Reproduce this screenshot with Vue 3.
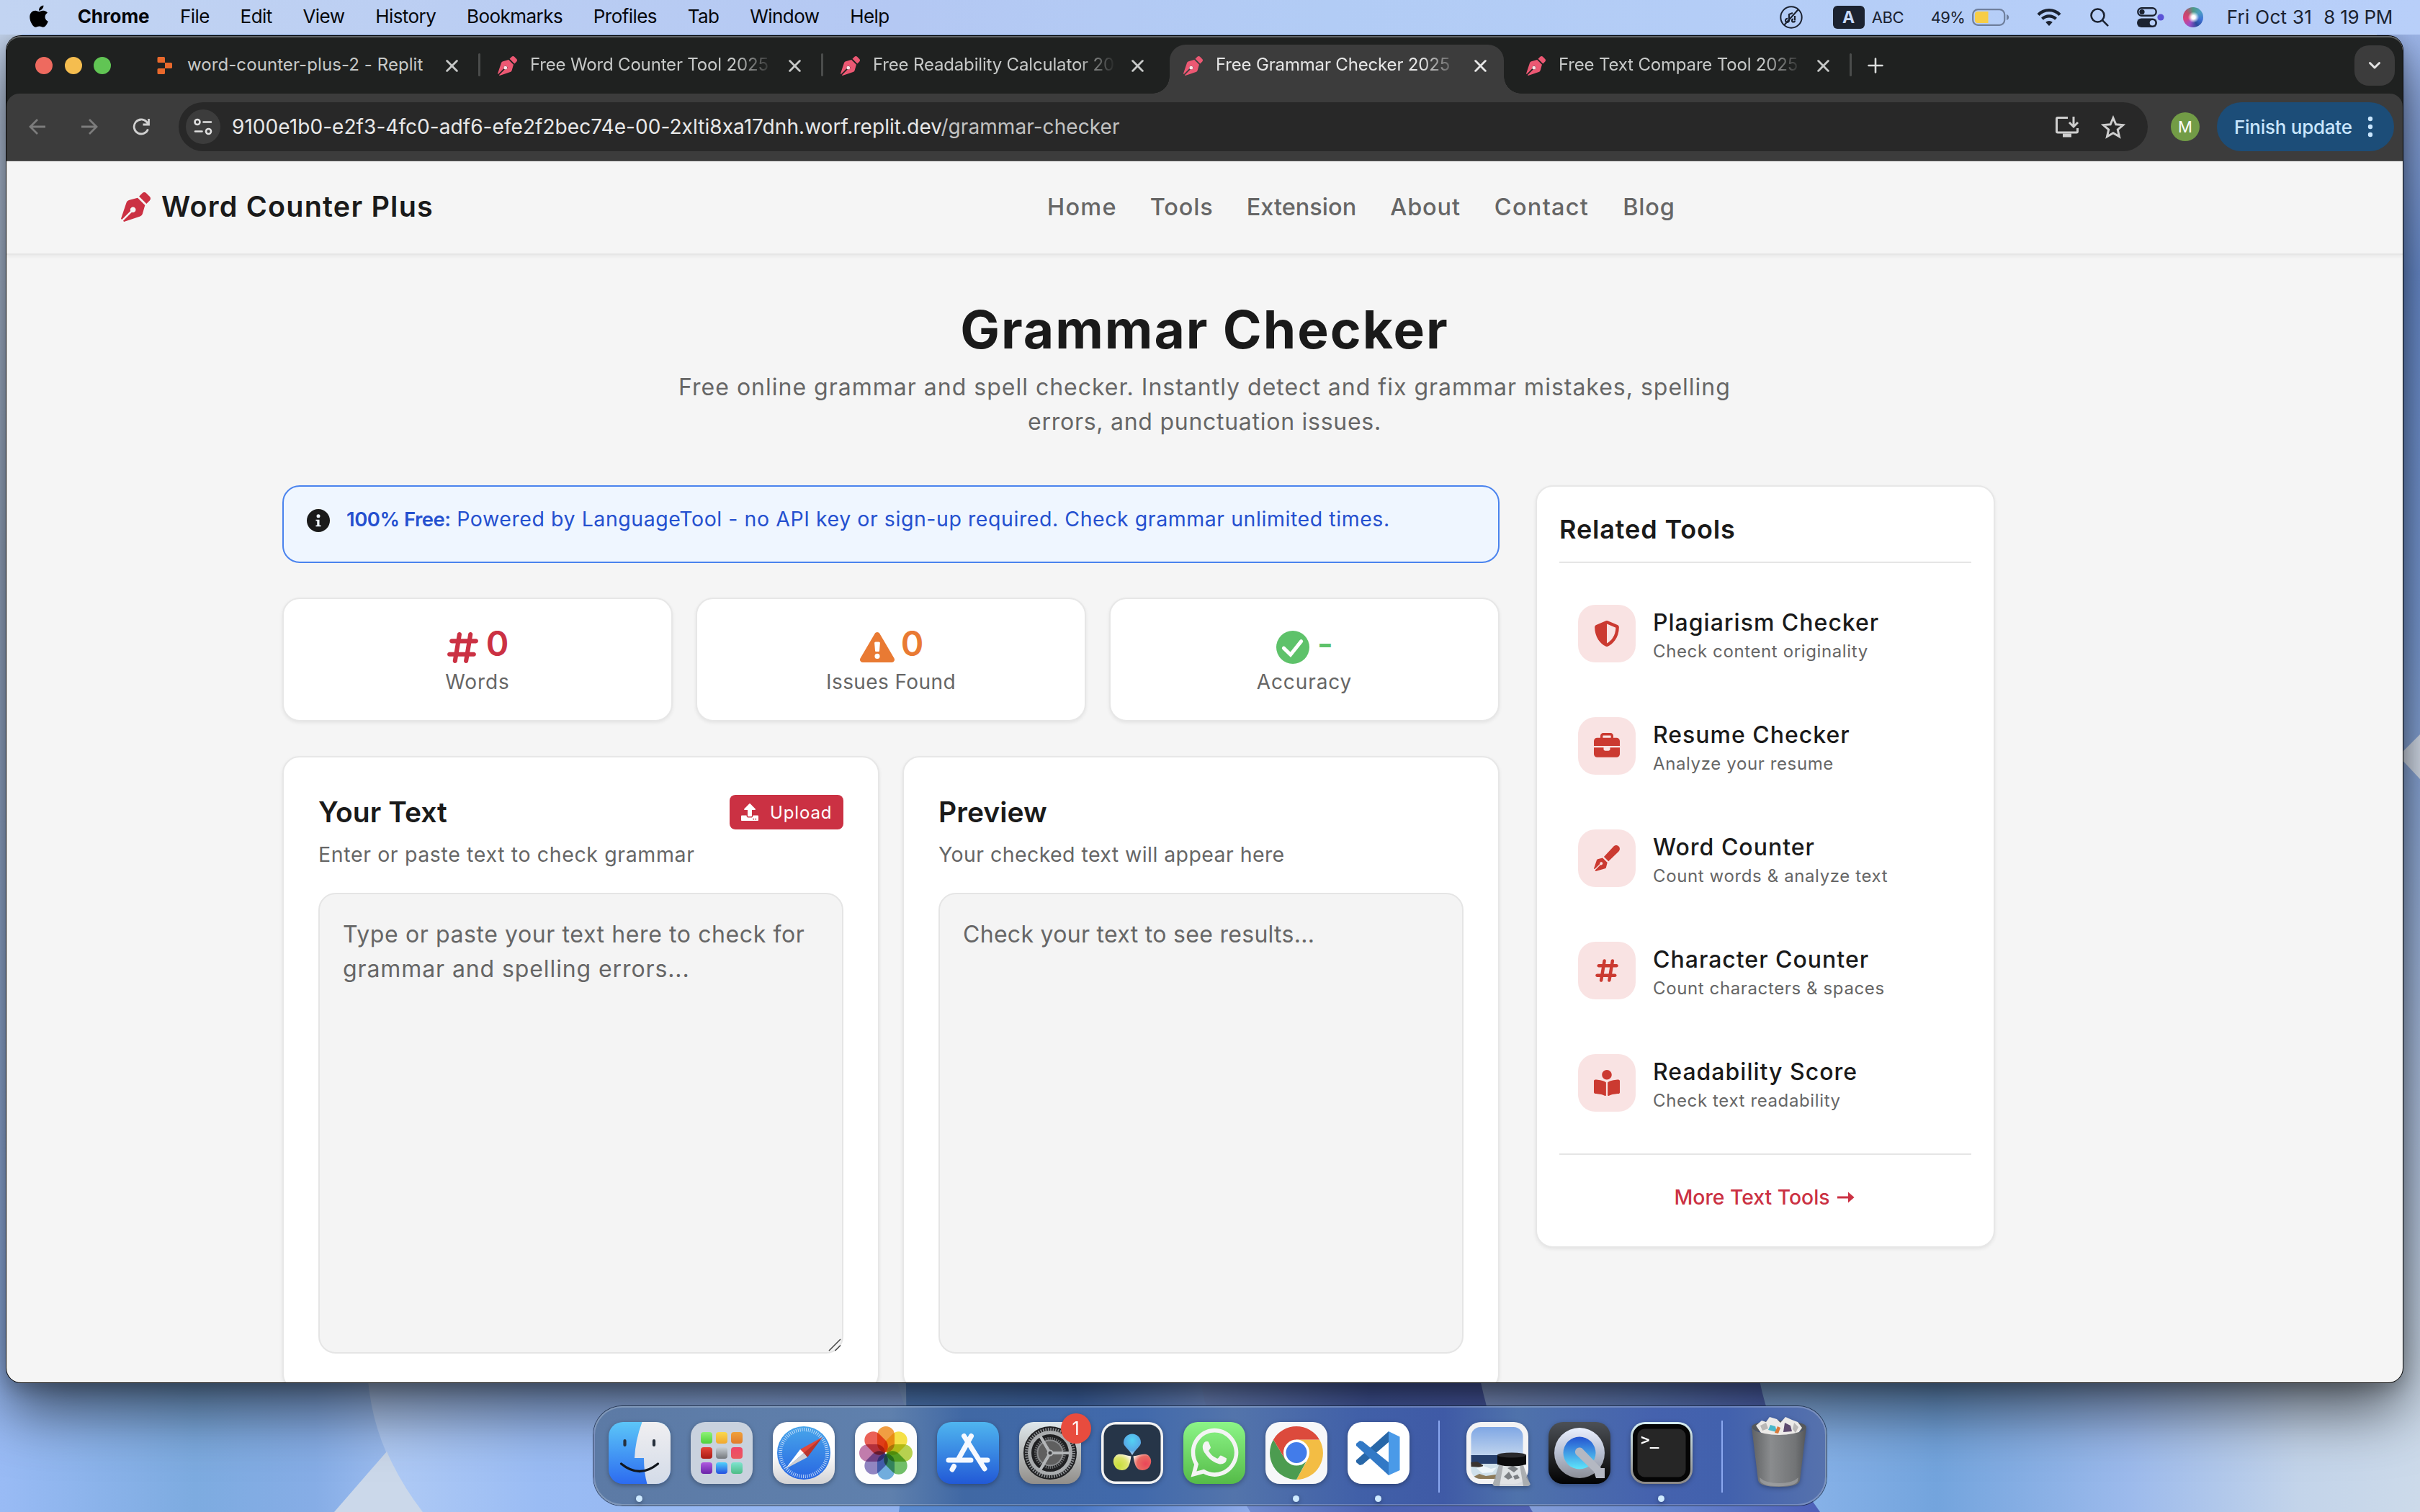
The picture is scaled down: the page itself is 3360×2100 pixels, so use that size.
<script setup>
const menus = ['File', 'Edit', 'View', 'History', 'Bookmarks', 'Profiles', 'Tab', 'Window', 'Help']

const tabs = [
  { title: 'word-counter-plus-2 - Replit', icon: 'replit' },
  { title: 'Free Word Counter Tool 2025', icon: 'pen' },
  { title: 'Free Readability Calculator 2025', icon: 'pen' },
  { title: 'Free Grammar Checker 2025', icon: 'pen', active: true },
  { title: 'Free Text Compare Tool 2025', icon: 'pen' },
]

const nav = ['Home', 'Tools', 'Extension', 'About', 'Contact', 'Blog']

const penNib =
  'M136.6 138.79a64.003 64.003 0 0 0-43.31 41.35L0 460l14.69 14.69L164.8 324.58c-2.99-6.26-4.8-13.18-4.8-20.58 0-26.51 21.49-48 48-48s48 21.49 48 48-21.49 48-48 48c-7.4 0-14.32-1.81-20.58-4.8L37.31 497.31 52 512l279.86-93.29a64.003 64.003 0 0 0 41.35-43.31L416 224 288 96l-151.4 42.79zm361.34-64.62l-60.11-60.11c-18.75-18.75-49.16-18.75-67.91 0l-56.55 56.55 128.02 128.02 56.55-56.55c18.75-18.75 18.75-49.15 0-67.91z'
const hashtag =
  'M181.3 32.4c17.4 2.9 29.2 19.4 26.3 36.8L197.8 128h95.1l11.5-69.3c2.9-17.4 19.4-29.2 36.8-26.3s29.2 19.4 26.3 36.8L357.8 128H416c17.7 0 32 14.3 32 32s-14.3 32-32 32H347.1L325.8 320H384c17.7 0 32 14.3 32 32s-14.3 32-32 32H315.1l-11.5 69.3c-2.9 17.4-19.4 29.2-36.8 26.3s-29.2-19.4-26.3-36.8l9.8-58.7H155.1l-11.5 69.3c-2.9 17.4-19.4 29.2-36.8 26.3s-29.2-19.4-26.3-36.8L90.2 384H32c-17.7 0-32-14.3-32-32s14.3-32 32-32h68.9l21.3-128H64c-17.7 0-32-14.3-32-32s14.3-32 32-32h68.9l11.5-69.3c2.9-17.4 19.4-29.2 36.8-26.3zM187.1 192L165.8 320h95.1l21.3-128H187.1z'

const tools = [
  {
    name: 'Plagiarism Checker',
    hint: 'Check content originality',
    box: '0 0 512 512',
    path: 'M466.5 83.7l-192-80a48.15 48.15 0 0 0-36.9 0l-192 80C27.7 91.1 16 108.6 16 128c0 198.5 114.5 335.7 221.5 380.3 11.8 4.9 25.1 4.9 36.9 0C360.1 472.6 496 349.3 496 128c0-19.4-11.7-36.9-29.5-44.3zM256.1 446.3l-.1-381 175.9 73.3c-3.3 151.4-82.1 261.1-175.8 307.7z',
  },
  {
    name: 'Resume Checker',
    hint: 'Analyze your resume',
    box: '0 0 512 512',
    path: 'M184 48H328c4.400 0 8 3.600 8 8V96H176V56c0-4.400 3.600-8 8-8zM128 56V96H64C28.700 96 0 124.700 0 160v96H512V160c0-35.300-28.700-64-64-64H384V56c0-30.900-25.100-56-56-56H184c-30.900 0-56 25.100-56 56zM512 288H320v32c0 17.700-14.300 32-32 32H224c-17.700 0-32-14.300-32-32V288H0V416c0 35.300 28.700 64 64 64H448c35.300 0 64-28.700 64-64V288z',
  },
  {
    name: 'Word Counter',
    hint: 'Count words & analyze text',
    box: '0 0 512 512',
    path: 'M198 226L384 28C418-8 462-8 490 22c30 30 28 74-6 106L288 318zM172 250L266 342 240 440c-3 10-9 17-18 20L38 512 22 494 128 388c30 8 52-16 44-38-8-24-42-26-52-4-4 8-4 14-2 22L14 474 0 458 56 290c3-10 10-16 20-18z',
  },
  { name: 'Character Counter', hint: 'Count characters & spaces', box: '-32 0 512 512', path: hashtag },
  {
    name: 'Readability Score',
    hint: 'Check text readability',
    box: '0 0 512 512',
    path: 'M352 96c0-53.02-42.98-96-96-96s-96 42.98-96 96 42.98 96 96 96 96-42.98 96-96zM233.59 241.1c-59.33-36.32-155.43-46.3-203.79-49.05C13.55 191.13 0 203.51 0 219.14v222.8c0 14.33 11.59 26.28 26.49 27.05 43.66 2.29 131.99 10.68 193.04 41.43 9.37 4.72 20.48-1.71 20.48-11.87V252.56c-.01-4.67-2.32-8.95-6.42-11.46zm248.61-49.05c-48.35 2.74-144.46 12.73-203.78 49.05-4.1 2.51-6.41 6.96-6.41 11.63v245.79c0 10.19 11.14 16.63 20.54 11.9 61.04-30.72 149.32-39.11 192.97-41.4 14.9-.78 26.49-12.73 26.49-27.06V219.14c-.01-15.63-13.56-28.01-29.81-27.09z',
  },
]

const launchpad = [
  ['#8df277', '#4fcf3a'], ['#f9d94c', '#f2a72f'], ['#f0a13a', '#e07b2c'],
  ['#e8453a', '#a81c14'], ['#c9d0d6', '#74787c'], ['#f0466a', '#e95a5e'],
  ['#b05be0', '#6a24a8'], ['#4fd0fb', '#2450e0'], ['#7fe3cf', '#4dbd86'],
]

const petals = [
  { a: 0, c: '#f2952d' }, { a: 45, c: '#f6df33' }, { a: 90, c: '#b2cf3c' }, { a: 135, c: '#62b958' },
  { a: 180, c: '#62a6dc' }, { a: 225, c: '#8579bd' }, { a: 270, c: '#bd6fa5' }, { a: 315, c: '#ea5145' },
]
</script>

<template>
  <div class="desktop">
    <svg class="wallpaper" viewBox="0 0 3360 2100" preserveAspectRatio="none">
      <defs>
        <linearGradient id="wpBase" x1="0" x2="1" y1="0" y2="0">
          <stop offset="0" stop-color="#99bbf5" />
          <stop offset=".08" stop-color="#7dabe0" />
          <stop offset=".13" stop-color="#86ade6" />
          <stop offset=".16" stop-color="#9bbcf0" />
          <stop offset=".74" stop-color="#8ab4ea" />
          <stop offset=".8" stop-color="#73a4dd" />
          <stop offset=".88" stop-color="#9cbaec" />
          <stop offset=".95" stop-color="#c3d4ea" />
          <stop offset="1" stop-color="#ccdaea" />
        </linearGradient>
        <linearGradient id="wpA" x1="0" x2="1" y1="0" y2="0">
          <stop offset="0" stop-color="#b2ccf5" />
          <stop offset=".3" stop-color="#9abcf4" />
          <stop offset="1" stop-color="#8fb0ee" />
        </linearGradient>
        <linearGradient id="wpB" x1="0" x2="1" y1="0" y2="0">
          <stop offset="0" stop-color="#5a8bd0" />
          <stop offset=".5" stop-color="#4a78c4" />
          <stop offset="1" stop-color="#90acea" />
        </linearGradient>
        <linearGradient id="wpC" x1="0" x2="1" y1="0" y2="0">
          <stop offset="0" stop-color="#7f9bda" />
          <stop offset=".5" stop-color="#4d64b4" />
          <stop offset="1" stop-color="#5060b2" />
        </linearGradient>
        <linearGradient id="wpD" x1="0" x2="1" y1="0" y2="0">
          <stop offset="0" stop-color="#8fa6dc" />
          <stop offset=".5" stop-color="#6a8ad0" />
          <stop offset="1" stop-color="#4d5fb8" />
        </linearGradient>
        <linearGradient id="wpR" x1="0" x2="0" y1="0" y2="1">
          <stop offset="0" stop-color="#a6bdee" />
          <stop offset=".2" stop-color="#6d92d6" />
          <stop offset=".46" stop-color="#7fa2de" />
          <stop offset=".8" stop-color="#b4c8e8" />
          <stop offset="1" stop-color="#ccdaea" />
        </linearGradient>
        <linearGradient id="wpL" x1="0" x2="0" y1="0" y2="1">
          <stop offset="0" stop-color="#c6d6ee" />
          <stop offset=".4" stop-color="#a9bcd8" />
          <stop offset="1" stop-color="#99bbf5" />
        </linearGradient>
      </defs>
      <rect width="3360" height="2100" fill="url(#wpBase)" />
      <rect width="30" height="1900" fill="url(#wpL)" />
      <rect x="3300" width="60" height="1900" fill="url(#wpR)" />
      <path d="M3330 1050L3360 1020V1082Z" fill="#dfe8f6" />
      <path d="M510 1900Q514 2010 587 2100H1300L1240 1900Z" fill="url(#wpA)" />
      <path d="M537 2016L464 2100H587Q556 2060 537 2016Z" fill="#cbd8ea" />
      <path d="M1257 1900Q1262 2000 1248 2100H1740L1664 1900Z" fill="url(#wpB)" />
      <path d="M1664 1900Q1680 2010 1736 2100H2140L2052 1900Z" fill="url(#wpC)" />
      <path d="M2052 1900Q2072 2010 2128 2100H2527Q2455 2000 2440 1900Z" fill="url(#wpD)" />
    </svg>

    <header class="menubar">
      <div class="menu-left">
        <svg class="apple" viewBox="0 30 384 450">
          <path d="M318.7 268.7c-.2-36.7 16.4-64.4 50-84.8-18.800-26.900-47.200-41.700-84.700-44.600-35.500-2.800-74.300 20.700-88.500 20.700-15 0-49.400-19.700-76.400-19.700C63.300 141.200 4 184.800 4 273.500q0 39.300 14.400 81.200c12.800 36.700 59 126.700 107.200 125.200 25.200-.6 43-17.900 75.800-17.900 31.800 0 48.300 17.900 76.400 17.900 48.600-.7 90.400-82.500 102.600-119.300-65.200-30.700-61.700-90-61.700-91.900zm-56.600-164.200c27.300-32.400 24.800-61.900 24-72.500-24.100 1.400-52 16.400-67.900 34.900-17.500 19.800-27.800 44.300-25.600 71.900 26.100 2 49.900-11.400 69.500-34.300z" />
        </svg>
        <b>Chrome</b>
        <span v-for="m in menus" :key="m">{{ m }}</span>
      </div>
      <div class="menu-right">
        <svg class="i-shazam" viewBox="0 0 32 32" fill="none" stroke="#1b2230" stroke-width="2">
          <circle cx="16" cy="16" r="14.700" />
          <path d="M25.500 5.500L6.500 26.500" />
          <path d="M13 20.500a2.500 2.500 0 1 1-2-2.500M13 20.500V12l5-2M21 14v6M21 20.500a2 2 0 1 1-2-2" stroke-width="2.200" />
        </svg>
        <span class="input-badge">A</span>
        <span class="abc">ABC</span>
        <span class="pct">49%</span>
        <svg class="i-battery" viewBox="0 0 52 24">
          <rect x="1.200" y="1.200" width="44" height="21.600" rx="7" fill="none" stroke="#6f7f9c" stroke-width="2.200" />
          <path d="M8 4h14.500v16H8a4 4 0 0 1-4-4V8a4 4 0 0 1 4-4z" fill="#f7cd46" />
          <path d="M48 8c2.500 1 3.200 2.500 3.200 4s-.7 3-3.200 4z" fill="#6f7f9c" />
        </svg>
        <svg class="i-wifi" viewBox="0 0 34 25" fill="none" stroke="#1b2230" stroke-width="4.200">
          <path d="M2 9.500a21 21 0 0 1 30 0M7.500 15.200a13.500 13.500 0 0 1 19 0" />
          <path d="M17 25l-4.800-5.200a7 7 0 0 1 9.600 0z" fill="#1b2230" stroke="none" />
        </svg>
        <svg class="i-search" viewBox="0 0 26 26" fill="none" stroke="#1b2230" stroke-width="2.600" stroke-linecap="round">
          <circle cx="10.500" cy="10.500" r="9" /><path d="M17.300 17.300l7 7" />
        </svg>
        <svg class="i-cc" viewBox="0 0 38 28">
          <rect x="1.300" y="1.300" width="25.400" height="10.400" rx="5.200" fill="none" stroke="#1b2230" stroke-width="2.400" />
          <circle cx="7" cy="6.500" r="3.600" fill="#1b2230" />
          <rect y="15.500" width="28" height="12.500" rx="6.200" fill="#1b2230" />
          <circle cx="21.500" cy="21.700" r="3.800" fill="#b8cff8" />
          <circle cx="33" cy="14" r="4.600" fill="#5b53d6" />
        </svg>
        <span class="siri"></span>
        <span class="date">Fri Oct 31</span>
        <span class="time">8 19 PM</span>
      </div>
    </header>

    <main class="window">
      <div class="tabstrip">
        <div class="lights"><i class="red"></i><i class="amber"></i><i class="green"></i></div>
        <div v-for="(t, i) in tabs" :key="t.title" class="tab" :class="{ active: t.active, quiet: i === 2 || t.active }">
          <svg v-if="t.icon === 'replit'" class="fav replit" viewBox="0 0 24 24" fill="#e9692c">
            <path d="M2 0h7.500a1.500 1.500 0 0 1 1.500 1.500V8H2a1.500 1.500 0 0 1-1.500-1.500v-5A1.500 1.500 0 0 1 2 0zM11 8h8.500A1.500 1.500 0 0 1 21 9.500v5a1.500 1.500 0 0 1-1.500 1.500H11zM2 16h9v6.500A1.500 1.500 0 0 1 9.500 24H2a1.500 1.500 0 0 1-1.500-1.500v-5A1.500 1.500 0 0 1 2 16z" />
          </svg>
          <svg v-else class="fav" viewBox="0 0 512 512" fill="#ec5873">
            <path :d="penNib" /><circle cx="205" cy="306" r="46" fill="#fbe4e8" />
          </svg>
          <span class="tab-title" :class="{ fade: t.icon === 'pen' }">{{ t.title }}</span>
          <svg class="close" viewBox="0 0 16 16" stroke-width="2.600" stroke-linecap="round"><path d="M1.500 1.500l13 13M14.500 1.500l-13 13" /></svg>
        </div>
        <svg class="new-tab" viewBox="0 0 22 22" stroke="#dadcdb" stroke-width="2.600" stroke-linecap="round"><path d="M11 1.500v19M1.500 11h19" /></svg>
        <span class="tab-search">
          <svg viewBox="0 0 18 12" fill="none" stroke="#e3e3e3" stroke-width="3" stroke-linecap="round" stroke-linejoin="round"><path d="M2.500 2.500L9 9l6.500-6.500" /></svg>
        </span>
      </div>

      <div class="toolbar">
        <div class="nav-icons">
          <svg viewBox="0 0 24 24" stroke="#7c7c7c"><path d="M23 12H2M12 2L2 12l10 10" /></svg>
          <svg viewBox="0 0 24 24" stroke="#7c7c7c"><path d="M1 12h21M12 2l10 10-10 10" /></svg>
          <svg viewBox="0 0 24 24" stroke="#d0d0d0"><path d="M21.500 15.500A10 10 0 1 1 19.500 5.200L22 8M22.500 1v8h-8" /></svg>
        </div>
        <div class="omnibox">
          <span class="site-info">
            <svg viewBox="0 0 26 24" fill="none" stroke="#e0e0e0" stroke-width="2.600" stroke-linecap="round">
              <circle cx="5" cy="5.500" r="3.500" /><path d="M13.500 5.500H24M2 18.500h9.500" /><circle cx="20.500" cy="18.500" r="3.500" />
            </svg>
          </span>
          <span class="url">9100e1b0-e2f3-4fc0-adf6-efe2f2bec74e-00-2xlti8xa17dnh.worf.replit.dev<em>/grammar-checker</em></span>
          <svg class="install" viewBox="0 0 32 30" fill="none" stroke="#cfcfcf" stroke-width="3">
            <path d="M17 2.500H3a1.500 1.500 0 0 0-1.500 1.500v17.500a1.500 1.500 0 0 0 1.500 1.500h26a1.500 1.500 0 0 0 1.500-1.500V17" />
            <path d="M25 1v13M19 9l6 6 6-6" /><path d="M10 27h12" stroke-width="5" />
          </svg>
          <svg class="star" viewBox="0 0 32 31" fill="none" stroke="#cfcfcf" stroke-width="2.800" stroke-linejoin="miter">
            <path d="M16 3.500l3.600 8.500 9.300.8-7 6.100 2.100 9.100-8-4.800-8 4.800 2.100-9.100-7-6.100 9.300-.8z" />
          </svg>
        </div>
        <span class="avatar">M</span>
        <div class="update">
          <span>Finish update</span>
          <svg viewBox="0 0 8 30" fill="#c9e6fd"><circle cx="4" cy="4" r="3.200" /><circle cx="4" cy="15" r="3.200" /><circle cx="4" cy="26" r="3.200" /></svg>
        </div>
      </div>

      <div class="page">
        <div class="site-header">
          <div class="brand">
            <svg viewBox="0 0 512 512" fill="#cb3143"><path :d="penNib" /></svg>
            <span>Word Counter Plus</span>
          </div>
          <nav><a v-for="n in nav" :key="n" :class="n.toLowerCase()">{{ n }}</a></nav>
        </div>

        <div class="hero">
          <h1>Grammar Checker</h1>
          <p>
            <span class="l1">Free online grammar and spell checker. Instantly detect and fix grammar mistakes, spelling</span><br />
            <span class="l2">errors, and punctuation issues.</span>
          </p>
        </div>

        <div class="columns">
          <section class="checker">
            <div class="banner">
              <svg viewBox="0 0 512 512" fill="#1a1a1a">
                <path d="M256 512A256 256 0 1 0 256 0a256 256 0 1 0 0 512z" />
                <path d="M200 236h80v124h32v26H200v-26h28v-98h-28z" fill="#eff6ff" /><circle cx="256" cy="156" r="40" fill="#eff6ff" />
              </svg>
              <p><strong>100% Free:</strong> Powered by LanguageTool - no API key or sign-up required. Check grammar unlimited times.</p>
            </div>

            <div class="stats">
              <div class="stat crimson">
                <div class="value"><svg viewBox="0 0 448 512" class="s-hash"><path :d="hashtag" /></svg><b>0</b></div>
                <span>Words</span>
              </div>
              <div class="stat orange">
                <div class="value">
                  <svg viewBox="0 0 512 512">
                    <path fill-rule="evenodd" d="M256 32c14.200 0 27.300 7.500 34.500 19.800l216 368c7.300 12.400 7.300 27.700.2 40.100S486.300 480 472 480H40c-14.300 0-27.600-7.700-34.700-20.100s-7-27.800.2-40.100l216-368C228.700 39.500 241.800 32 256 32zM232 176c-11 0-18 9-17 19l9 112c1 9 7 14 15 14h34c8 0 14-5 15-14l9-112c1-10-6-19-17-19zM294 388a38 38 0 1 0-76 0 38 38 0 1 0 76 0z" />
                  </svg><b>0</b>
                </div>
                <span class="issues">Issues Found</span>
              </div>
              <div class="stat green">
                <div class="value">
                  <svg viewBox="8 8 496 496">
                    <circle cx="256" cy="256" r="248" /><path d="M120 268l102 98L382 166" fill="none" stroke="#fff" stroke-width="54" stroke-linecap="round" stroke-linejoin="miter" />
                  </svg><b>-</b>
                </div>
                <span>Accuracy</span>
              </div>
            </div>

            <div class="panels">
              <div class="panel">
                <div class="panel-head">
                  <h2>Your Text</h2>
                  <span class="upload">
                    <svg viewBox="0 0 512 512" fill="#fff"><path d="M296 384h-80c-13.300 0-24-10.700-24-24V192h-87.700c-17.800 0-26.700-21.500-14.100-34.100L242.300 5.700c7.500-7.500 19.800-7.500 27.300 0l152.200 152.200c12.600 12.600 3.700 34.100-14.100 34.100H320v168c0 13.300-10.700 24-24 24zm216-8v112c0 13.300-10.700 24-24 24H24c-13.300 0-24-10.700-24-24V376c0-13.300 10.700-24 24-24h136v8c0 30.900 25.100 56 56 56h80c30.900 0 56-25.100 56-56v-8h136c13.300 0 24 10.700 24 24zm-124 88c0-11-9-20-20-20s-20 9-20 20 9 20 20 20 20-9 20-20zm64 0c0-11-9-20-20-20s-20 9-20 20 9 20 20 20 20-9 20-20z" /></svg>
                    Upload
                  </span>
                </div>
                <p class="lead">Enter or paste text to check grammar</p>
                <div class="field">
                  <span class="t1">Type or paste your text here to check for</span><br /><span class="t2">grammar and spelling errors...</span>
                  <svg class="grip" viewBox="0 0 18 18" stroke="#4a4a4a" stroke-width="1.600"><path d="M1 17L17 1M9.500 17L17 9.500" /></svg>
                </div>
              </div>
              <div class="panel">
                <div class="panel-head"><h2>Preview</h2></div>
                <p class="lead tight">Your checked text will appear here</p>
                <div class="field"><span class="t3">Check your text to see results...</span></div>
              </div>
            </div>
          </section>

          <aside class="related">
            <h3>Related Tools</h3>
            <ul>
              <li v-for="t in tools" :key="t.name">
                <span class="tool-icon"><svg :viewBox="t.box"><path :d="t.path" /></svg></span>
                <span class="tool-text"><b>{{ t.name }}</b><small>{{ t.hint }}</small></span>
              </li>
            </ul>
            <div class="more">
              <span>More Text Tools</span>
              <svg viewBox="0 0 24 18"><path d="M0 9h17" stroke="#cb3143" stroke-width="3" /><path d="M15 1.500L23.500 9 15 16.500z" fill="#cb3143" /></svg>
            </div>
          </aside>
        </div>
      </div>
    </main>

    <footer class="dock">
      <div class="app running">
        <svg viewBox="0 0 86 86">
          <defs><linearGradient id="fd" x1="0" x2="0" y1="0" y2="1"><stop offset="0" stop-color="#5cc6f8" /><stop offset="1" stop-color="#2c6bf0" /></linearGradient>
            <linearGradient id="fw" x1="0" x2="0" y1="0" y2="1"><stop offset="0" stop-color="#f0eff1" /><stop offset="1" stop-color="#d3dbe8" /></linearGradient>
            <clipPath id="tile"><rect width="86" height="86" rx="20" /></clipPath></defs>
          <g clip-path="url(#tile)">
            <rect width="86" height="86" fill="url(#fd)" />
            <path d="M46.500 0Q37 26 36 50H49Q49 70 53.500 86H86V0z" fill="url(#fw)" />
            <path d="M22.500 26v6M63 26v6" stroke="#26303c" stroke-width="4.200" stroke-linecap="round" />
            <path d="M17.500 58Q43 79 68.500 58" fill="none" stroke="#11161d" stroke-width="3.200" stroke-linecap="round" />
          </g>
        </svg>
      </div>

      <div class="app launchpad">
        <i v-for="(c, i) in launchpad" :key="i" :style="{ background: `linear-gradient(${c[0]}, ${c[1]})` }"></i>
      </div>

      <div class="app">
        <svg viewBox="0 0 86 86">
          <defs><linearGradient id="sfT" x1="0" x2="0" y1="0" y2="1"><stop offset=".5" stop-color="#fff" /><stop offset="1" stop-color="#d2d2d4" /></linearGradient>
            <linearGradient id="sfB" x1="0" x2="0" y1="0" y2="1"><stop offset="0" stop-color="#47a5ea" /><stop offset="1" stop-color="#2866e2" /></linearGradient></defs>
          <rect width="86" height="86" rx="20" fill="url(#sfT)" />
          <circle cx="43" cy="43" r="37" fill="url(#sfB)" />
          <circle cx="43" cy="43" r="32.500" fill="none" stroke="#d7e8fb" stroke-width="5" stroke-dasharray="1 1.836" opacity=".85" />
          <path d="M69 21L38 38l5.500 7z" fill="#e0483b" /><path d="M69 21L48 49l-5-6z" fill="#b9362d" />
          <path d="M17.500 65L38 38l5 5z" fill="#fff" /><path d="M17.500 65L48 49l-5-6z" fill="#cfcfd2" />
        </svg>
      </div>

      <div class="app">
        <svg viewBox="0 0 86 86">
          <rect width="86" height="86" rx="20" fill="#fdfdfd" />
          <g class="blend">
            <rect v-for="p in petals" :key="p.a" x="31" y="6" width="24" height="36" rx="12" :fill="p.c" :transform="`rotate(${p.a} 43 43)`" />
          </g>
        </svg>
      </div>

      <div class="app">
        <svg viewBox="0 0 86 86">
          <defs><linearGradient id="as" x1="0" x2="0" y1="0" y2="1"><stop offset="0" stop-color="#4fb5ef" /><stop offset="1" stop-color="#2259d6" /></linearGradient></defs>
          <rect width="86" height="86" rx="20" fill="url(#as)" />
          <g stroke="#f6f9ff" stroke-width="7" stroke-linecap="round">
            <path d="M47.500 19.500L30.500 50M37.500 19.500L66 65M23.500 61.500l-2.500 4.500M16 53h31M59 53h11" />
          </g>
        </svg>
      </div>

      <div class="app">
        <svg viewBox="0 0 86 86" fill="none">
          <defs><linearGradient id="st" x1="0" x2="0" y1="0" y2="1"><stop offset="0" stop-color="#dfe8ec" /><stop offset="1" stop-color="#918e8a" /></linearGradient></defs>
          <rect width="86" height="86" rx="20" fill="url(#st)" />
          <circle cx="43" cy="43" r="37" fill="#1f2022" />
          <circle cx="43" cy="43" r="33" stroke="#8c8f92" stroke-width="4" stroke-dasharray="1.700 1.755" />
          <circle cx="43" cy="43" r="28.500" stroke="#a9acae" stroke-width="5" />
          <circle cx="43" cy="43" r="20" stroke="#6c6e70" stroke-width="4" stroke-dasharray="1.500 1.500" />
          <circle cx="43" cy="43" r="17.500" stroke="#8b8d8f" stroke-width="2" fill="#5f5f5f" />
          <path d="M43 43H70M43 43L29.500 20M43 43L29.500 66" stroke="#b3b6b8" stroke-width="4.200" />
          <circle cx="43" cy="43" r="3.500" fill="#3c3d3f" stroke="#b3b6b8" stroke-width="2" />
        </svg>
        <span class="badge">1</span>
      </div>

      <div class="app">
        <svg viewBox="0 0 86 86">
          <defs><radialGradient id="dvA" cx=".5" cy=".3" r=".8"><stop offset="0" stop-color="#53d3f4" /><stop offset=".6" stop-color="#57a9e6" /><stop offset="1" stop-color="#f1e7f5" /></radialGradient>
            <radialGradient id="dvB" cx=".3" cy=".7" r=".8"><stop offset="0" stop-color="#c7dd3b" /><stop offset=".6" stop-color="#dde56b" /><stop offset="1" stop-color="#fbf3e4" /></radialGradient>
            <radialGradient id="dvC" cx=".7" cy=".6" r=".8"><stop offset="0" stop-color="#ea4658" /><stop offset=".6" stop-color="#ea6a62" /><stop offset="1" stop-color="#fbeee6" /></radialGradient></defs>
          <rect width="86" height="86" rx="20" fill="#f2f2f2" /><rect x="3.500" y="3.500" width="79" height="79" rx="16" fill="#263548" />
          <path d="M43 46C38 37 31 34 31 28.500a12 12 0 0 1 24 0C55 34 48 37 43 46z" fill="url(#dvA)" />
          <path d="M41.500 47.500C40 58 38 67 29 67a12 12 0 0 1-8-21C26 43 33 46 41.500 47.500z" fill="url(#dvB)" />
          <path d="M44.500 47.500C46 58 48 67 57 67a12 12 0 0 0 8-21C60 43 53 46 44.500 47.500z" fill="url(#dvC)" />
        </svg>
      </div>

      <div class="app">
        <svg viewBox="0 0 86 86">
          <defs><linearGradient id="wa" x1="0" x2="0" y1="0" y2="1"><stop offset="0" stop-color="#8cf587" /><stop offset="1" stop-color="#55bb48" /></linearGradient></defs>
          <rect width="86" height="86" rx="20" fill="url(#wa)" />
          <g transform="translate(10.500 4) scale(.147 .151)"><path fill="#f4f4f4" d="M380.900 97.100C339 55.100 283.200 32 223.900 32c-122.400 0-222 99.600-222 222 0 39.100 10.200 77.300 29.600 111L0 480l117.700-30.900c32.400 17.700 68.900 27 106.100 27h.1c122.300 0 224.100-99.600 224.100-222 0-59.300-25.200-115-67.100-157zm-157 341.600c-33.200 0-65.700-8.900-94-25.700l-6.700-4-69.800 18.300L72 359.200l-4.400-7c-18.500-29.400-28.200-63.300-28.200-98.200 0-101.700 82.800-184.500 184.600-184.500 49.300 0 95.600 19.200 130.400 54.100 34.800 34.900 56.200 81.200 56.100 130.500 0 101.800-84.900 184.600-186.600 184.600zm101.200-138.200c-5.500-2.800-32.800-16.200-37.900-18-5.100-1.900-8.800-2.800-12.500 2.800-3.700 5.600-14.300 18-17.600 21.800-3.200 3.700-6.500 4.200-12 1.400-32.600-16.300-54-29.100-75.500-66-5.700-9.800 5.700-9.100 16.300-30.300 1.800-3.700.9-6.900-.5-9.700-1.400-2.800-12.500-30.100-17.100-41.200-4.500-10.800-9.100-9.300-12.500-9.500-3.200-.2-6.900-.2-10.600-.2-3.700 0-9.700 1.400-14.800 6.900-5.100 5.600-19.400 19-19.400 46.300 0 27.300 19.900 53.700 22.600 57.400 2.800 3.700 39.100 59.700 94.800 83.800 35.200 15.200 49 16.500 66.600 13.900 10.700-1.600 32.800-13.400 37.400-26.400 4.600-13 4.600-24.100 3.200-26.400-1.300-2.500-5-3.900-10.500-6.600z" /></g>
        </svg>
      </div>

      <div class="app running">
        <svg viewBox="0 0 86 86">
          <rect width="86" height="86" rx="20" fill="#f6f7f9" />
          <path d="M75 24.500A37 37 0 0 1 43 80L58.500 52 43 24.500z" fill="#f3bd44" />
          <path d="M43 80A37 37 0 0 1 11 24.500L27.500 52 50 59.500 56.500 55z" fill="#4c9c50" />
          <path d="M11 24.500L27.500 52 40 30 43 24.500H75A37 37 0 0 0 11 24.500z" fill="#dc4a3c" />
          <circle cx="43" cy="42.500" r="18" fill="#fff" /><circle cx="43" cy="42.500" r="14.500" fill="#427cea" />
        </svg>
      </div>

      <div class="app running">
        <svg viewBox="0 0 86 86">
          <rect width="86" height="86" rx="20" fill="#fff" />
          <path d="M57 13L12 53v3l5 4 4-1 36-31z" fill="#2867a8" />
          <path d="M57 74L12 33v-3l5-4 4 1 36 29z" fill="#3279c6" />
          <path d="M57 13l15.500 7.500V67L57 74z" fill="#4a9ae8" />
        </svg>
      </div>

      <i class="divider"></i>

      <div class="app">
        <svg viewBox="0 0 86 86">
          <defs><clipPath id="pv"><rect x="6.500" y="7" width="72" height="72" rx="13" /></clipPath>
            <linearGradient id="pvS" x1="0" x2="0" y1="0" y2="1"><stop offset="0" stop-color="#7ea6e4" /><stop offset="1" stop-color="#c0d4ee" /></linearGradient></defs>
          <rect width="86" height="86" rx="20" fill="#f3f3f4" />
          <g clip-path="url(#pv)">
            <rect x="6" y="6" width="74" height="41" fill="url(#pvS)" /><rect x="6" y="46" width="74" height="13" fill="#27406e" />
            <rect x="6" y="58" width="74" height="22" fill="#cfe0ea" />
            <path d="M6 56l9-1 8 5v3l-17-1z" fill="#3b342f" /><path d="M6 78l12-6 9 3 14-2v8H6z" fill="#8d7a58" />
            <path d="M14 64l10-3 10 4 8-2-6 7-14 1z" fill="#eef6fa" />
          </g>
          <path d="M45 58h34l1 14 8 13q2 4-5 4H42q-7 0-5-4l8-13z" fill="#dfe1e3" opacity=".94" />
          <path d="M45 60l-8 25q-1 4 5 4h4l5-29zM79 60l9 25q2 4-5 4h-4l-5-29z" fill="#9da1a4" opacity=".8" />
          <path d="M57 64l8-3 7 4-6 5zM52 76l7-7 5 8-6 3zM65 75l6-2 3 5-7 2z" fill="#7c8084" />
          <path d="M43 46q20-6 40 0v13q-20 5-40 0z" fill="#0b0b0c" /><ellipse cx="63" cy="46" rx="20" ry="3.500" fill="#2a2a2c" />
        </svg>
      </div>

      <div class="app">
        <svg viewBox="0 0 86 86">
          <defs><linearGradient id="qt" x1="0" x2="0" y1="0" y2="1"><stop offset="0" stop-color="#4c5056" /><stop offset="1" stop-color="#020202" /></linearGradient>
            <linearGradient id="qr" x1="0" x2="0" y1="0" y2="1"><stop offset="0" stop-color="#eaf0fe" /><stop offset=".5" stop-color="#b7bfd2" /><stop offset="1" stop-color="#8b8e96" /></linearGradient>
            <linearGradient id="qb" x1="0" x2="0" y1="0" y2="1"><stop offset="0" stop-color="#2453d0" /><stop offset="1" stop-color="#5fe6fa" /></linearGradient></defs>
          <rect width="86" height="86" rx="20" fill="url(#qt)" />
          <circle cx="43" cy="43" r="35" fill="url(#qr)" /><circle cx="43" cy="43" r="22.500" fill="url(#qb)" />
          <path d="M38 45a6 6 0 0 1 10-7l25 26h5v14H66l-3-9z" fill="#b4b8c2" />
        </svg>
      </div>

      <div class="app running">
        <svg viewBox="0 0 86 86">
          <defs><linearGradient id="tm" x1="0" x2="0" y1="0" y2="1"><stop offset="0" stop-color="#d5eef2" /><stop offset="1" stop-color="#8a8785" /></linearGradient></defs>
          <rect width="86" height="86" rx="20" fill="url(#tm)" /><rect x="3" y="3" width="80" height="80" rx="17" fill="#050505" />
          <rect x="9.500" y="9.500" width="67" height="67" rx="10" fill="#262626" />
        </svg>
        <span class="prompt">&gt;_</span>
      </div>

      <i class="divider"></i>

      <div class="app trash">
        <svg viewBox="0 0 80 100">
          <defs><linearGradient id="tr" x1="0" x2="1" y1="0" y2="0"><stop offset="0" stop-color="#5f6163" /><stop offset=".35" stop-color="#8a8c8e" /><stop offset=".8" stop-color="#727476" /><stop offset="1" stop-color="#545658" /></linearGradient></defs>
          <ellipse cx="40" cy="16" rx="38" ry="9" fill="#55585b" />
          <path d="M8 14l8-7 6 2 5-7 10 3 5 5 7-8 9 4 8 3 6 8-7 10-16 6-18-2-14-4z" fill="#eceae8" />
          <path d="M28 13l7 2 2 8-12-3z" fill="#49b7c9" /><path d="M48 10l8 4 2 8-12 1z" fill="#5d4a6e" />
          <path d="M38 15l4 2-3 8-5-1z" fill="#d9793a" /><path d="M14 14l8-4 3 8-8 3zM61 10l6 6-4 8-4-5z" fill="#b9b7b6" />
          <path d="M2 16Q4 22 20 25q20 4 40 0 16-3 18-9L69 90q-2 9-29 9t-29-9z" fill="url(#tr)" />
          <path d="M13 86q8 8 27 8t27-8l-1 5q-3 7-26 7t-26-7z" fill="#a6a8aa" opacity=".6" />
        </svg>
      </div>
    </footer>
  </div>
</template>

<style>
body { background: #9bbcf0; overflow: hidden; }
</style>

<style scoped>
.desktop { position: relative; isolation: isolate; width: 3360px; height: 2100px; overflow: hidden; font-family: Inter, "Liberation Sans", sans-serif; }
.desktop * { box-sizing: border-box; }
svg { display: block; flex: none; }
h1, h2, h3, p, ul { margin: 0; padding: 0; }
.wallpaper { position: absolute; z-index: -1; left: 0; top: 0; width: 3360px; height: 2100px; }

.menubar { position: relative; height: 48px; display: flex; justify-content: space-between; padding: 0 38px 2px 41px; background: linear-gradient(90deg, #c2d4f2, #b4c8f3 37%, #b2ccf5 55%, #b8cff9); font-size: 26px; line-height: 46px; color: #05070b; z-index: 1; }
.menu-left { display: flex; align-items: center; gap: 42.700px; letter-spacing: -.550px; white-space: nowrap; }
.menu-left b { letter-spacing: -.150px; }
.apple { width: 26px; height: 31px; margin: -1px -2px 0 0; }
.menu-right { display: flex; align-items: center; color: #1b2230; white-space: nowrap; padding-top: 1px; }
.i-shazam { width: 32px; height: 32px; margin-right: 42px; }
.input-badge { width: 44px; height: 32px; border-radius: 6px; background: #1b2230; color: #c6d8f9; font-weight: 700; font-size: 23px; line-height: 32px; text-align: center; margin-right: 10px; }
.abc { font-size: 22px; letter-spacing: -.400px; width: 82px; }
.pct { font-size: 22px; letter-spacing: -.700px; width: 57px; }
.i-battery { width: 52px; height: 24px; margin-right: 38px; }
.i-wifi { width: 34px; height: 25px; margin-right: 40px; }
.i-search { width: 26px; height: 26px; margin-right: 39px; }
.i-cc { width: 38px; height: 28px; margin-right: 26px; }
.siri { width: 28px; height: 28px; border-radius: 50%; margin-right: 33px; background: radial-gradient(circle at 52% 50%, #fff 0 12%, transparent 38%), conic-gradient(#4f9a86, #4a9fc0, #3f74d8, #2b4a9c, #9a4ec8, #d8417d, #c04a6a, #4f9a86); }
.date { letter-spacing: .300px; margin-right: 16px; }
.time { letter-spacing: -.250px; }

.desktop::before { content: ""; position: absolute; z-index: 0; left: 8px; top: 49px; width: 3329px; height: 1872px; border-radius: 21px; background: #000; box-shadow: 0 36px 84px rgba(0, 0, 0, .62), 0 8px 24px rgba(0, 0, 0, .2); }
.window { position: absolute; left: 9px; top: 50px; width: 3327px; height: 1870px; border-radius: 20px; overflow: hidden; background: #f5f5f5; }
.window::after { content: ""; position: absolute; inset: 0; border-radius: 20px; border-top: 2px solid rgba(140, 145, 150, .6); pointer-events: none; }

.tabstrip { height: 80px; display: flex; align-items: center; background: #1f2120; padding-top: 2px; box-shadow: 0 20px 0 #1f2120; }
.lights { width: 181px; display: flex; gap: 16.500px; padding-left: 40px; }
.lights i { width: 24px; height: 24px; border-radius: 50%; }
.red { background: #ee6a5f; }
.amber { background: #f5bd4f; }
.green { background: #61c554; }
.tab { position: relative; width: 476px; height: 78px; display: flex; align-items: center; padding-left: 25px; color: #c7c9c8; font-size: 24px; }
.tab::after { content: ""; position: absolute; right: -1px; top: 22px; width: 3px; height: 32px; border-radius: 2px; background: #4a4c4b; }
.tab.quiet::after { display: none; }
.tab > * { position: relative; z-index: 1; }
.fav { width: 27px; height: 27px; margin-right: 18px; }
.replit { width: 24px; height: 24px; margin: 0 18px 0 3px; }
.tab-title { width: 334px; margin: -2px 25px 0 0; overflow: hidden; white-space: nowrap; line-height: 40px; letter-spacing: .080px; }
.tab-title.fade { letter-spacing: -.170px; -webkit-mask-image: linear-gradient(90deg, #000 285px, transparent 338px); mask-image: linear-gradient(90deg, #000 285px, transparent 338px); }
.close { width: 17px; height: 17px; stroke: #c7c9c8; }
.tab.active { color: #e6e6e6; z-index: 2; }
.tab.active .close { stroke: #e6e6e6; }
.tab.active::before { content: ""; position: absolute; z-index: 0; left: 6px; right: 6px; top: 10px; bottom: 0; background: #3c3c3c; border-radius: 22px 22px 0 0; }
.tab.active::after { display: block; z-index: 0; left: -18px; right: -18px; top: auto; bottom: 0; width: auto; height: 24px; border-radius: 0; background: radial-gradient(circle at 0 0, transparent 23.500px, #3c3c3c 24px) left / 24px 24px no-repeat, radial-gradient(circle at 100% 0, transparent 23.500px, #3c3c3c 24px) right / 24px 24px no-repeat; }
.new-tab { width: 22px; height: 22px; margin-left: 23px; }
.tab-search { width: 56px; height: 56px; border-radius: 20px; background: #3c3c3c; margin: 0 11px 0 auto; display: flex; align-items: center; justify-content: center; }
.tab-search svg { width: 18px; height: 12px; }

.toolbar { position: relative; height: 94px; display: flex; align-items: center; background: #3c3c3c; border-bottom: 2px solid #474747; border-radius: 18px 18px 0 0; }
.nav-icons { width: 239px; display: flex; gap: 48px; padding-left: 31px; }
.nav-icons svg { width: 24px; height: 24px; fill: none; stroke-width: 2.800; }
.omnibox { width: 2734px; height: 68px; border-radius: 34px; background: #282828; display: flex; align-items: center; padding-left: 10px; }
.site-info { width: 48px; height: 48px; border-radius: 50%; background: #3c3c3c; display: flex; align-items: center; justify-content: center; margin-right: 16px; }
.site-info svg { width: 26px; height: 24px; }
.url { font-size: 28px; letter-spacing: .060px; color: #e8e8e8; white-space: nowrap; line-height: 40px; }
.url em { font-style: normal; color: #c2c2c2; }
.install { width: 32px; height: 30px; margin-left: auto; }
.star { width: 34px; height: 33px; margin: 0 31px 0 31px; }
.avatar { width: 40px; height: 40px; border-radius: 50%; background: #729c46; color: #fff; font-size: 22px; line-height: 40px; text-align: center; margin: 0 24px 0 32px; }
.update { width: 246px; height: 68px; border-radius: 34px; background: #1c4d78; color: #c9e6fd; font-size: 26px; font-weight: 500; letter-spacing: -.260px; display: flex; align-items: center; padding-left: 24px; white-space: nowrap; }
.update svg { width: 8px; height: 30px; margin-left: 21px; }

.page { color: #1a1a1a; height: 1696px; overflow: hidden; }
.site-header { height: 130px; display: flex; align-items: center; padding: 0 0 2px 159px; border-bottom: 2px solid #e6e6e6; box-shadow: 0 2px 5px rgba(0, 0, 0, .06); }
.brand { width: 1286px; display: flex; align-items: center; gap: 15px; font-weight: 600; font-size: 39.500px; letter-spacing: 1.200px; white-space: nowrap; }
.brand svg { width: 41px; height: 41px; }
nav { display: flex; gap: 47px; font-size: 32.500px; font-weight: 500; letter-spacing: .850px; color: #666; }
nav .tools { margin-left: -1px; }
nav .extension { letter-spacing: 0; margin-left: -1px; }
nav .contact, nav .home { letter-spacing: 1.250px; }
.hero { padding: 48px 0 64px; text-align: center; }
h1 { font-size: 73px; line-height: 111px; height: 112px; font-weight: 700; letter-spacing: 2px; }
.hero p { font-size: 32px; line-height: 48px; color: #666; white-space: nowrap; }
.l1 { letter-spacing: 1px; }
.l2 { letter-spacing: .730px; }

.columns { display: grid; grid-template-columns: 1690px 638px; gap: 50px; padding-left: 383px; align-items: start; }
.checker { display: flex; flex-direction: column; gap: 48px; }
.banner { height: 108px; border: 2px solid #4a83ee; border-radius: 24px; background: #eff6ff; display: flex; padding: 24px 0 0 32px; gap: 23px; color: #2550cf; }
.banner svg { width: 32px; height: 32px; margin-top: 7px; }
.banner p { font-size: 28.500px; line-height: 42px; letter-spacing: .560px; white-space: nowrap; }
.banner strong { font-weight: 600; font-size: 27.500px; letter-spacing: -.500px; }
.stats { display: grid; grid-template-columns: repeat(3, 1fr); gap: 32px; }
.stat { height: 172px; background: #fff; border: 2px solid #e7e7e7; border-radius: 24px; box-shadow: 0 2px 5px rgba(0, 0, 0, .07); display: flex; flex-direction: column; align-items: center; padding-top: 32px; }
.value { height: 60px; display: flex; align-items: center; gap: 11px; font-size: 48px; line-height: 60px; padding-left: 1px; }
.value b { font-weight: 600; }
.value svg { width: 48px; height: 48px; margin-top: 10px; fill: currentColor; }
.value svg.s-hash { width: 43px; height: 49px; }
.crimson { color: #cb3143; }
.orange { color: #e97a33; }
.orange .value { gap: 9px; padding-left: 2px; }
.green.stat { color: #5ec26a; background: #fff; }
.green .value svg { width: 46px; height: 46px; }
.stat > span { margin-top: 2px; font-size: 28px; line-height: 42px; letter-spacing: .900px; color: #666; }
.stat > .issues { letter-spacing: .400px; }
.panels { display: grid; grid-template-columns: 1fr 1fr; gap: 32px; }
.panel { height: 882px; background: #fff; border: 2px solid #e7e7e7; border-radius: 24px; box-shadow: 0 2px 5px rgba(0, 0, 0, .07); padding: 46px 48px 0; }
.panel-head { height: 60px; display: flex; align-items: center; justify-content: space-between; }
h2 { font-size: 39px; font-weight: 600; line-height: 60px; letter-spacing: .050px; }
.upload { width: 158px; height: 48px; border-radius: 8px; background: #cb3143; color: #fff; display: flex; align-items: center; gap: 16px; padding-left: 16px; font-size: 24px; letter-spacing: .850px; }
.upload svg { width: 24px; height: 24px; }
.lead { margin-top: 8px; font-size: 28.500px; line-height: 42px; letter-spacing: .630px; color: #666; white-space: nowrap; }
.lead.tight { letter-spacing: .420px; }
.field { position: relative; height: 640px; margin-top: 32px; border: 2px solid #e5e5e5; border-radius: 24px; background: #f4f4f4; padding: 32px; font-size: 32px; line-height: 48px; color: #666; white-space: nowrap; }
.t1 { letter-spacing: .600px; }
.t2 { letter-spacing: .900px; }
.t3 { letter-spacing: .300px; }
.grip { position: absolute; right: 1px; bottom: 1px; width: 18px; height: 18px; }

.related { height: 1059px; background: #fff; border: 2px solid #e7e7e7; border-radius: 24px; box-shadow: 0 2px 5px rgba(0, 0, 0, .07); padding: 32px 31px 0; }
h3 { font-size: 36px; line-height: 54px; font-weight: 600; letter-spacing: .850px; padding-bottom: 18px; border-bottom: 2px solid #e5e5e5; height: 74px; }
ul { list-style: none; margin: 20px 0; }
li { height: 156px; display: flex; align-items: center; gap: 24px; padding-left: 26px; }
.tool-icon { width: 80px; height: 80px; border-radius: 24px; background: #f9e3e3; display: flex; align-items: center; justify-content: center; }
.tool-icon svg { width: 36px; height: 36px; fill: #cb3a31; }
.tool-text { display: flex; flex-direction: column; white-space: nowrap; padding-top: 3px; }
.tool-text b { font-size: 32px; line-height: 46px; font-weight: 500; letter-spacing: 1px; }
.tool-text small { font-size: 24px; line-height: 34px; letter-spacing: .620px; color: #666; }
.more { border-top: 2px solid #e5e5e5; padding-top: 38px; display: flex; justify-content: center; align-items: center; gap: 10px; font-size: 28.300px; font-weight: 500; line-height: 42px; color: #cb3143; padding-right: 3px; }
.more svg { width: 24px; height: 18px; }

.dock { position: absolute; left: 824px; top: 1953px; width: 1712px; height: 138px; border-radius: 40px; padding: 20px 0 0 18.500px; display: flex; gap: 28px; background: linear-gradient(90deg, #5c7aa5, #5f80ad 24%, #4068a4 30%, #4169ab 44%, #5374ab 52%, #4160a8 62%, #3f5aa6 69%, #4f72ab 75%, #4562ae 86%, #4261ad 92%, #5672ad); border: 2px solid rgba(255, 255, 255, .22); box-shadow: 0 0 0 1px rgba(20, 35, 60, .75); }
.app { position: relative; width: 86px; height: 86px; border-radius: 20px; filter: drop-shadow(0 2px 3px rgba(0, 0, 0, .3)); flex: none; }
.app > svg { width: 86px; height: 86px; overflow: visible; }
.app.running::after { content: ""; position: absolute; left: 38px; top: 102px; width: 9px; height: 9px; border-radius: 50%; background: #cfeaff; }
.launchpad { background: #c9d2de; display: grid; grid-template-columns: repeat(3, 16px); grid-auto-rows: 16px; gap: 5px; place-content: center; }
.launchpad i { border-radius: 4px; }
.blend rect { mix-blend-mode: multiply; opacity: .9; }
.badge { position: absolute; right: -14px; top: -12px; width: 42px; height: 42px; border-radius: 50%; background: #e84c3e; color: #fff; font-size: 25px; line-height: 42px; text-align: center; }
.prompt { position: absolute; left: 14px; top: 11px; font-family: "DejaVu Sans Mono", monospace; font-weight: 700; font-size: 21px; line-height: 28px; color: #fff; }
.divider { flex: none; width: 2px; height: 100px; margin: -2px 9.500px 0 12px; background: #8ba8f0; }
.trash { width: 80px; height: 100px; margin-top: -9px; }
.trash > svg { width: 80px; height: 100px; }
</style>
